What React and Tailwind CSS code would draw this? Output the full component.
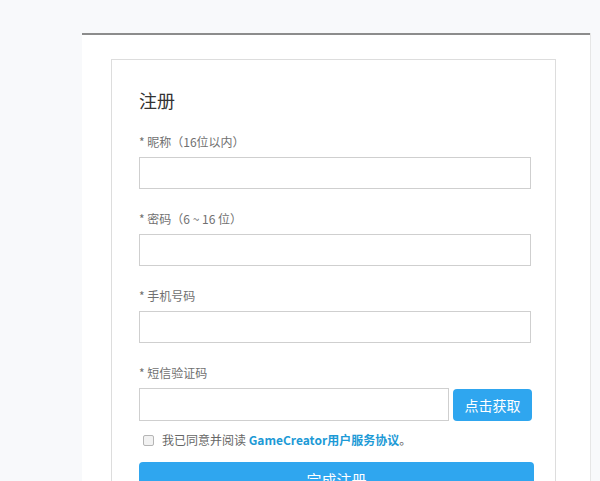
import React from 'react';

const fields = [
  { label: '* 昵称（16位以内）', type: 'text' },
  { label: '* 密码（6 ~ 16 位）', type: 'password' },
  { label: '* 手机号码', type: 'text' },
];

export default function App() {
  return (
    <div className="h-[481px] overflow-hidden bg-[#f8f9fb] pt-[33px] pl-[82px] font-['Microsoft_YaHei','Noto_Sans_CJK_SC',sans-serif]">
      <div className="w-[508px] h-full bg-white border-t-2 border-[#8c8c8c] pt-6 pl-[29px] shadow-[1px_0_0_#e6e6e6]">
        <div className="w-[445px] h-[500px] border border-[#dddddd] pl-[27px] pt-[28px]">
          <h2 className="text-[18px] leading-[24px] text-[#333]">注册</h2>

          <div className="mt-[21px] flex flex-col gap-[21px]">
            {fields.map((f) => (
              <div key={f.label}>
                <label className="block text-[12px] leading-[18px] text-[#707070]">{f.label}</label>
                <input
                  type={f.type}
                  className="mt-[6px] block w-[392px] h-[32px] border border-[#cfcfcf] px-2 text-[13px] outline-none"
                />
              </div>
            ))}

            <div>
              <label className="block text-[12px] leading-[18px] text-[#707070]">* 短信验证码</label>
              <div className="mt-[6px] flex items-end gap-1">
                <input
                  type="text"
                  className="block w-[310px] h-[33px] border border-[#cfcfcf] px-2 text-[13px] outline-none"
                />
                <button className="w-[79px] h-[32px] rounded-[4px] bg-[#2fa6ef] text-white text-[14px] leading-none">
                  点击获取
                </button>
              </div>
            </div>
          </div>

          <div className="mt-[10px] h-[18px] flex items-center pl-1">
            <input
              type="checkbox"
              className="appearance-none w-[11px] h-[11px] border border-[#b5b5b5] bg-[#f2f2f2] rounded-[2px]"
            />
            <span className="ml-2 text-[12px] leading-[18px] text-[#666]">
              我已同意并阅读 <a className="font-bold text-[#1d9ad6]">GameCreator用户服务协议</a>。
            </span>
          </div>

          <button className="mt-[13px] w-[395px] h-[34px] rounded-[4px] bg-[#2fa6ef] text-white text-[15px] leading-none">
            完成注册
          </button>
        </div>
      </div>
    </div>
  );
}
